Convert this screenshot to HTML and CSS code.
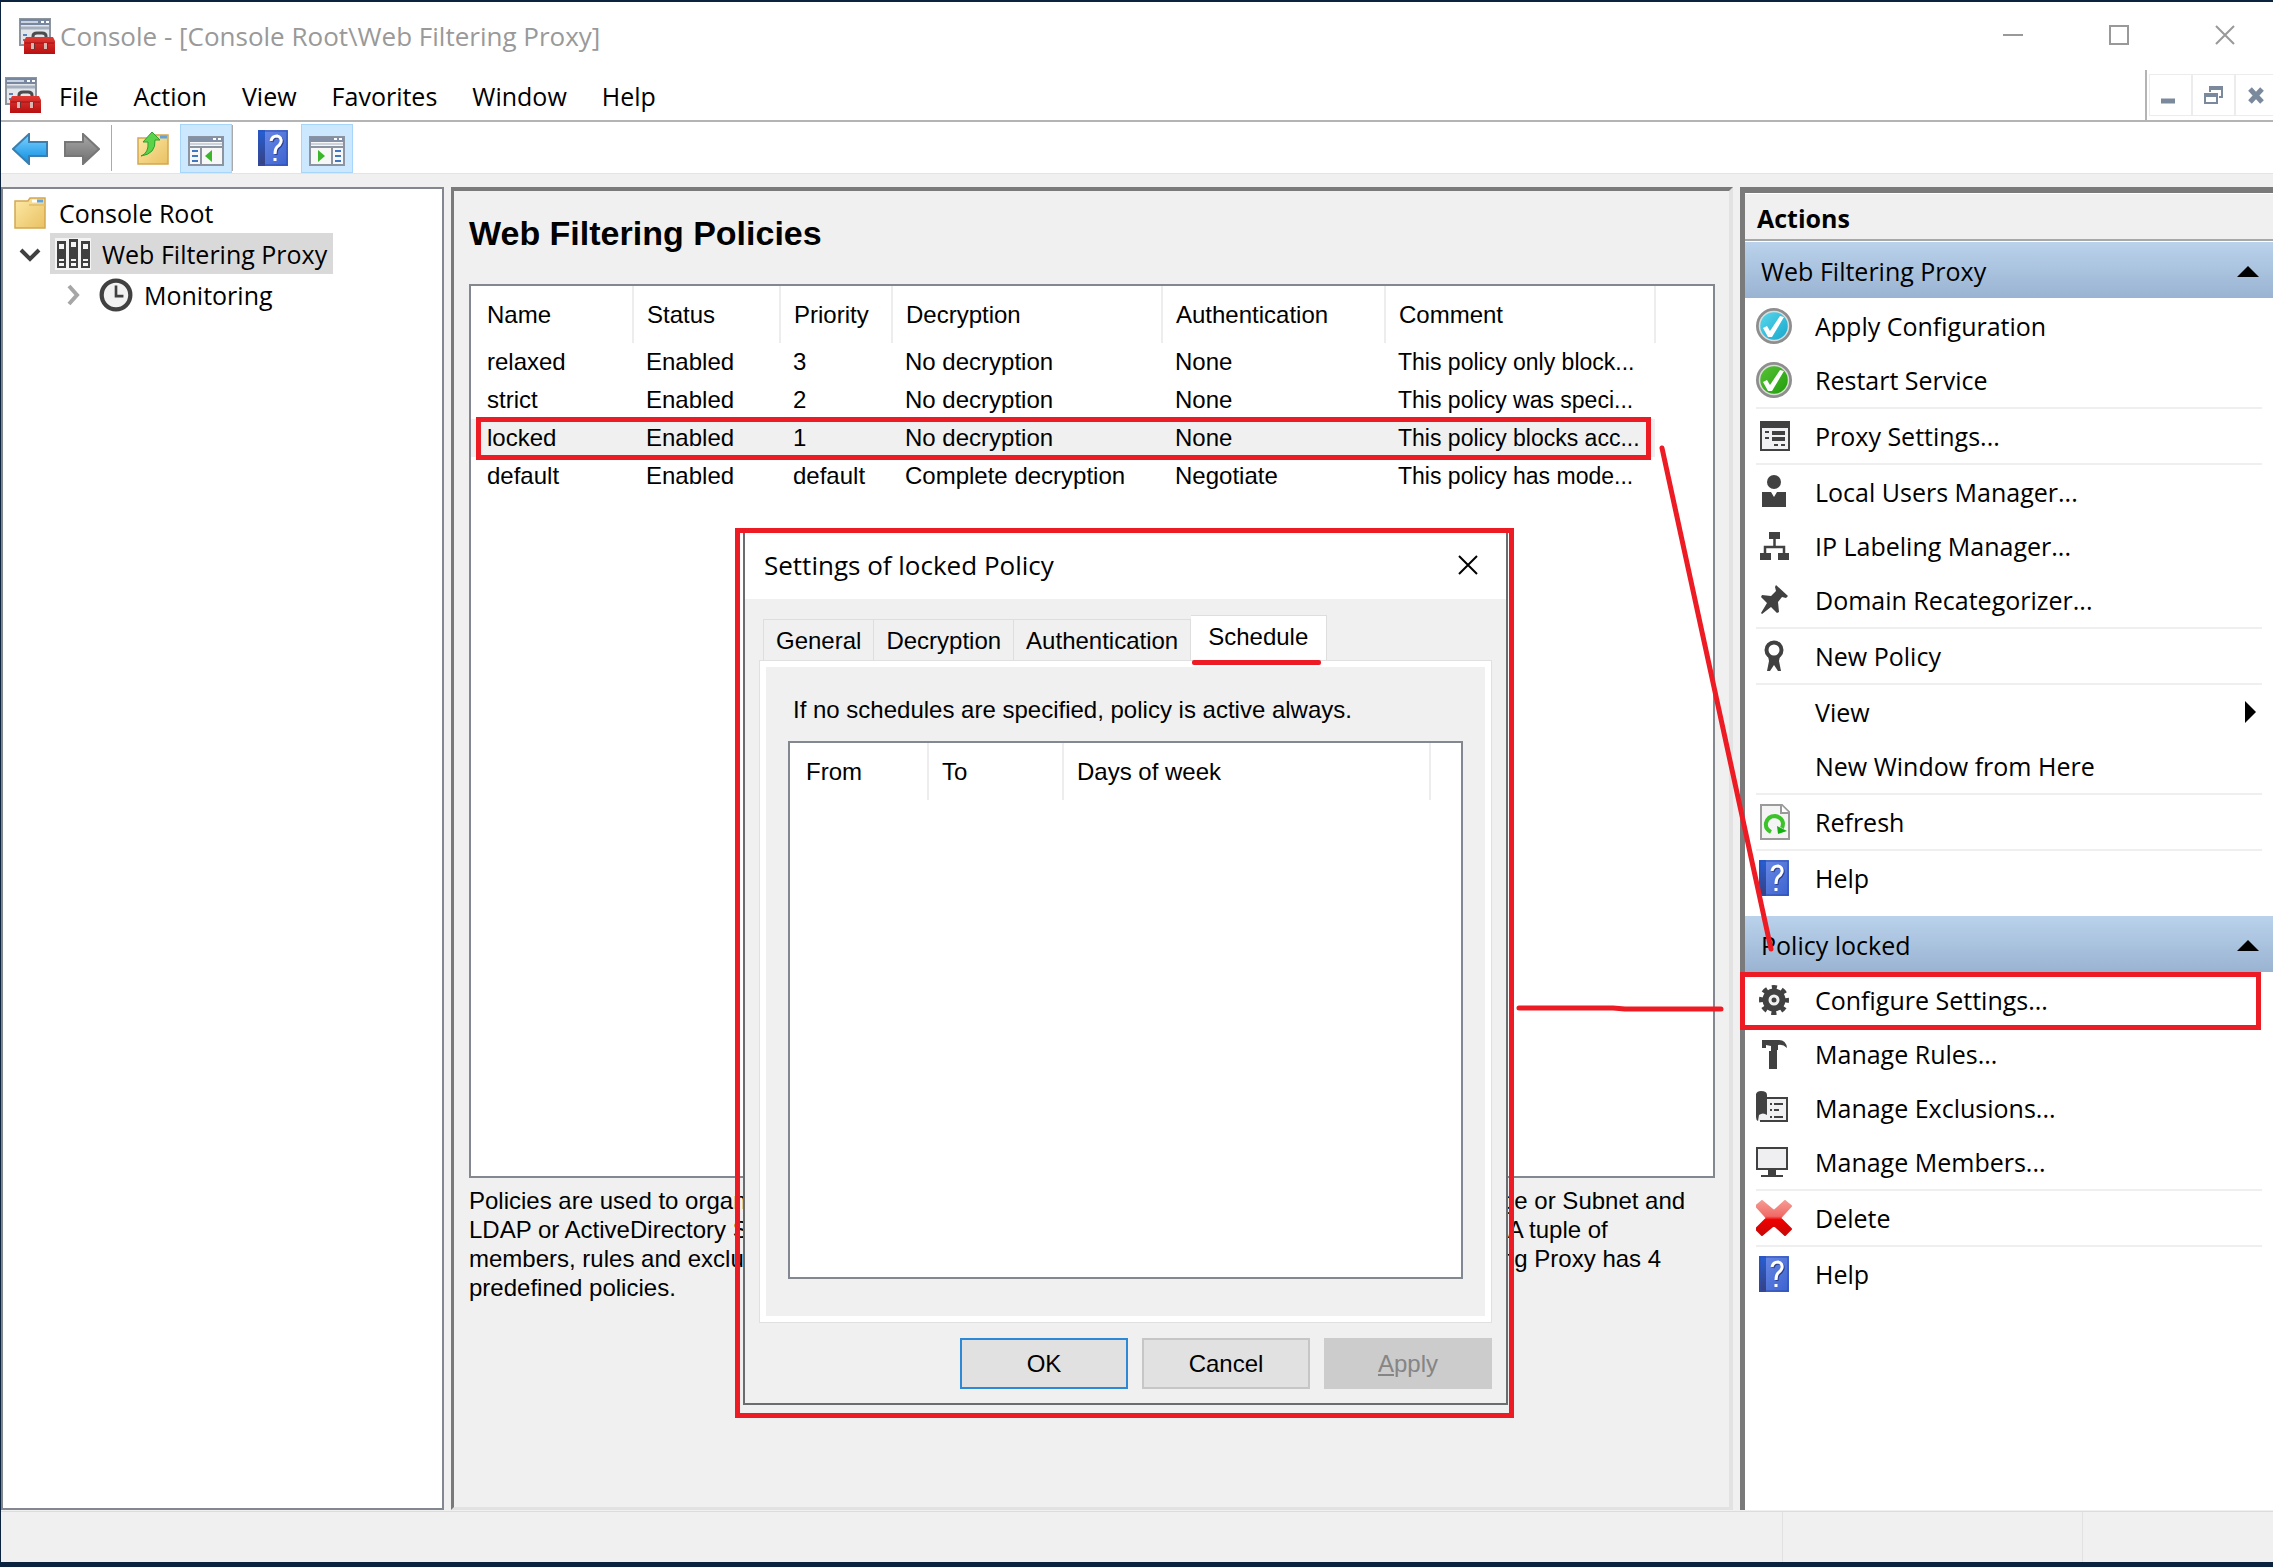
FILE: index.html
```html
<!DOCTYPE html>
<html lang="en">
<head>
<meta charset="utf-8">
<title>Console</title>
<link rel="stylesheet" href="styles.css">
</head>
<body>
<svg class="defs" aria-hidden="true">
  <defs>
    <linearGradient id="g-folder" x1="0" y1="0" x2="1" y2="1"><stop offset="0" stop-color="#fde9a6"/><stop offset="1" stop-color="#e9c163"/></linearGradient>
    <linearGradient id="g-blue" x1="0" y1="0" x2="0" y2="1"><stop offset="0" stop-color="#7fd4ff"/><stop offset="1" stop-color="#0a8be0"/></linearGradient>
    <linearGradient id="g-gray" x1="0" y1="0" x2="0" y2="1"><stop offset="0" stop-color="#a8a8a8"/><stop offset="1" stop-color="#6e6e6e"/></linearGradient>
    <linearGradient id="g-book" x1="0" y1="0" x2="1" y2="1"><stop offset="0" stop-color="#6d8ce8"/><stop offset="1" stop-color="#3b62cf"/></linearGradient>
    <linearGradient id="g-spine" x1="0" y1="0" x2="0" y2="1"><stop offset="0" stop-color="#2560d8"/><stop offset="1" stop-color="#38407c"/></linearGradient>
    <linearGradient id="g-cyan" x1="0" y1="0" x2="1" y2="1"><stop offset="0" stop-color="#5fdcf0"/><stop offset="1" stop-color="#12a3c8"/></linearGradient>
    <linearGradient id="g-green" x1="0" y1="0" x2="1" y2="1"><stop offset="0" stop-color="#5cc63a"/><stop offset="1" stop-color="#1c9a08"/></linearGradient>
    <linearGradient id="g-red" x1="0" y1="0" x2="0" y2="1"><stop offset="0" stop-color="#f59a92"/><stop offset=".45" stop-color="#f06a66"/><stop offset=".55" stop-color="#f00000"/><stop offset="1" stop-color="#c80808"/></linearGradient>
    <linearGradient id="g-box" x1="0" y1="0" x2="0" y2="1"><stop offset="0" stop-color="#e03a34"/><stop offset="1" stop-color="#b80f10"/></linearGradient>

    <symbol id="i-console" viewBox="0 0 36 36">
      <rect x="1" y="1" width="30" height="26" fill="#e3e7ec" stroke="#8d959f" stroke-width="2"/>
      <path d="M1 1h30v6H1z" fill="#76879f"/><path d="M2 4h17" stroke="#c9d3e2" stroke-width="2"/><path d="M22 4h3M27 4h3" stroke="#fff" stroke-width="2"/>
      <path d="M2 10h28" stroke="#a4afbd" stroke-width="3"/><path d="M4 17h4M4 22h3" stroke="#5b83b8" stroke-width="2"/>
      <path d="M14 20v-2q0-3 4-3h5q4 0 4 3v2" fill="none" stroke="#4c4c4c" stroke-width="3"/>
      <path d="M7 19h27l2 4v13H5V23z" fill="url(#g-box)"/><path d="M6 25h29" stroke="#a01014" stroke-width="1"/>
      <path d="M14 25v6M27 25v6" stroke="#d9b8b2" stroke-width="4"/><path d="M15.500 25v6M28.500 25v6" stroke="#6b3030" stroke-width="1"/>
    </symbol>
    <symbol id="i-back" viewBox="0 0 36 32"><path d="M1 16L17 1v8h18v14H17v8z" fill="url(#g-blue)" stroke="#3a7fb0" stroke-width="2"/></symbol>
    <symbol id="i-forward" viewBox="0 0 36 32"><path d="M35 16L19 1v8H1v14h18v8z" fill="url(#g-gray)" stroke="#777" stroke-width="2"/></symbol>
    <symbol id="i-folder" viewBox="0 0 32 32"><path d="M1 4h13l2-3h15v30H1z" fill="url(#g-folder)" stroke="#d3a850" stroke-width="1.500"/><path d="M15 8h16" stroke="#e2bd68" stroke-width="1.500"/><path d="M18 4h11" stroke="#fff" stroke-width="3"/><path d="M23 4h6" stroke="#5fa2dc" stroke-width="3"/></symbol>
    <symbol id="i-up" viewBox="0 0 32 34"><path d="M1 7h14l2-3h14v29H1z" fill="url(#g-folder)" stroke="#d3a850" stroke-width="1.500"/><path d="M23 6h7" stroke="#5fa2dc" stroke-width="3"/><path d="M4 25q8-3 7-14H6l9-10 8 8h-5q1 14-14 16z" fill="#5ad24a" stroke="#2fa02c"/></symbol>
    <symbol id="i-tree" viewBox="0 0 36 30"><rect x="1" y="1" width="34" height="28" fill="#f7f7f7" stroke="#8b94a0" stroke-width="2"/><path d="M1 1h34v5H1z" fill="#8391a8"/><path d="M25 3h3M30 3h3" stroke="#fff" stroke-width="2"/><path d="M2 8h32" stroke="#ccd3dc" stroke-width="2"/><path d="M1 11h34M13 12v17" stroke="#8b94a0" stroke-width="2"/><path d="M4 15h6M4 20h6M4 25h6" stroke="#3f78c0" stroke-width="2"/><path d="M24 14v12l-7-6z" fill="#3bb52a"/></symbol>
    <symbol id="i-pane" viewBox="0 0 36 30"><rect x="1" y="1" width="34" height="28" fill="#f7f7f7" stroke="#8b94a0" stroke-width="2"/><path d="M1 1h34v5H1z" fill="#8391a8"/><path d="M25 3h3M30 3h3" stroke="#fff" stroke-width="2"/><path d="M2 8h32" stroke="#ccd3dc" stroke-width="2"/><path d="M1 11h34M23 12v17" stroke="#8b94a0" stroke-width="2"/><path d="M26 15h6M26 20h6M26 25h6" stroke="#3f78c0" stroke-width="2"/><path d="M9 14v12l7-6z" fill="#3bb52a"/></symbol>
    <symbol id="i-help" viewBox="0 0 30 36"><rect width="30" height="36" fill="url(#g-book)"/><rect width="7" height="36" fill="url(#g-spine)"/><rect x="1" y="1" width="28" height="34" fill="none" stroke="#2f4fb0" stroke-width="1"/><path d="M13 11q1-5 6-5 5 1 4 6-1 3-4 5-2 2-2 7" fill="none" stroke="#2b3f90" stroke-width="3" transform="translate(1 1)"/><path d="M13 11q1-5 6-5 5 1 4 6-1 3-4 5-2 2-2 7M17 28v3" fill="none" stroke="#fff" stroke-width="3"/></symbol>
    <symbol id="i-binders" viewBox="0 0 36 32"><rect width="36" height="32" fill="#f4f4f4"/><g fill="#3f3f3f"><path d="M2 3h9v27H2zM14 1h9v29h-9zM26 3h9v27h-9z"/></g><g fill="#f4f4f4"><path d="M4 6h5v5H4zM16 4h5v5h-5zM28 6h5v5h-5zM4 21h5v2H4zM4 25h5v3H4zM16 21h5v2h-5zM16 25h5v3h-5zM28 21h5v2h-5zM28 25h5v3h-5z"/></g></symbol>
    <symbol id="i-clock" viewBox="0 0 32 32"><circle cx="16" cy="16" r="13.500" fill="#f2f2f2" stroke="#414141" stroke-width="4"/><path d="M16 7v10h7" fill="none" stroke="#414141" stroke-width="2.500"/></symbol>
    <symbol id="i-apply" viewBox="0 0 36 36"><circle cx="18" cy="18" r="16.500" fill="url(#g-cyan)" stroke="#8e8e8e" stroke-width="3"/><circle cx="18" cy="18" r="14.500" fill="none" stroke="#dcdcdc" stroke-width="1.500"/><path d="M7 20l4-2 3 5 10-15 4 1-12 20h-4z" fill="#fff"/></symbol>
    <symbol id="i-restart" viewBox="0 0 36 36"><circle cx="18" cy="18" r="16.500" fill="url(#g-green)" stroke="#8e8e8e" stroke-width="3"/><circle cx="18" cy="18" r="14.500" fill="none" stroke="#dcdcdc" stroke-width="1.500"/><path d="M7 20l4-2 3 5 10-15 4 1-12 20h-4z" fill="#fff"/></symbol>
    <symbol id="i-settings" viewBox="0 0 36 36"><rect x="5" y="4" width="28" height="28" fill="#f1f1f3" stroke="#414141" stroke-width="2"/><path d="M4 3h30v7H4z" fill="#414141"/><path d="M9 14h4M9 20h4M18 27h4M25 27h4" stroke="#414141" stroke-width="2"/><path d="M16 15h13M16 21h13" stroke="#414141" stroke-width="4"/></symbol>
    <symbol id="i-user" viewBox="0 0 36 36"><circle cx="18" cy="8" r="7" fill="#414141"/><path d="M6 18h9l3 5 3-5h9v15H6z" fill="#414141"/></symbol>
    <symbol id="i-net" viewBox="0 0 36 36"><path d="M13 4h11v7H13zM4 25h11v7H4zM22 25h11v7H22z" fill="#414141"/><path d="M18.500 10v9M9 26v-7h19v7" fill="none" stroke="#414141" stroke-width="2.500"/></symbol>
    <symbol id="i-pin" viewBox="0 0 36 36"><path d="M20 3l12 11-2 2-4-1-4 5 1 10-2 1-6-6-9 7-1-1 6-10-6-6 1-2 9 1 5-5-1-4z" fill="#414141"/></symbol>
    <symbol id="i-ribbon" viewBox="0 0 36 36"><circle cx="18" cy="12" r="7.500" fill="none" stroke="#414141" stroke-width="4"/><path d="M12 18h12l-1 5 2 10h-3l-4-6-4 6h-3l2-10z" fill="#414141"/></symbol>
    <symbol id="i-refresh" viewBox="0 0 36 36"><path d="M5 1h21l7 7v27H5z" fill="#f4f4f4" stroke="#9a9a9a" stroke-width="2"/><path d="M25 1v8h8" fill="#fff" stroke="#9a9a9a" stroke-width="2"/><path d="M15 28q-6-3-5-9 2-7 9-7 7 1 8 7 0 3-1 5" fill="none" stroke="#3cc22b" stroke-width="4"/><path d="M21 22l10 5-9 3z" fill="#16b010"/></symbol>
    <symbol id="i-gear" viewBox="0 0 36 36"><circle cx="18" cy="18" r="12.500" fill="none" stroke="#414141" stroke-width="5" stroke-dasharray="5 4.820" stroke-dashoffset="2.500"/><circle cx="18" cy="18" r="8.500" fill="#f0f0f0" stroke="#414141" stroke-width="6"/><circle cx="18" cy="18" r="2.500" fill="#414141"/></symbol>
    <symbol id="i-hammer" viewBox="0 0 36 36"><path d="M6 4h17q7 0 8 8-4-4-9-3v5h-1v19h-8V15h2v-5l-5-1v3H6z" fill="#414141"/></symbol>
    <symbol id="i-exclude" viewBox="0 0 36 36"><path d="M7 8h24v23H2V24z" fill="#f1f1f3"/><path d="M11 8h20v23H4" fill="none" stroke="#414141" stroke-width="2"/><path d="M0 4q1-3 5-3 6 0 6 4v20q-4-3-8 0l-1 6q-2-1-2-4z" fill="#414141"/><path d="M14 14h2M18 14h9M14 20h2M18 20h5M14 27h2M18 27h9" stroke="#414141" stroke-width="2"/></symbol>
    <symbol id="i-monitor" viewBox="0 0 36 36"><rect x="1" y="4" width="30" height="21" fill="#efeff1" stroke="#414141" stroke-width="2"/><path d="M12 25h8v6h7v2H5v-2h7z" fill="#414141"/></symbol>
    <symbol id="i-delete" viewBox="0 0 36 36"><path d="M6 1l12 10L29 1l6 5-11 12 11 11-6 6-11-10L6 35l-6-6 11-11L0 6z" fill="url(#g-red)" stroke="url(#g-red)" stroke-linejoin="round" stroke-width="2"/></symbol>
    <symbol id="i-close" viewBox="0 0 20 20"><path d="M1 1l18 18M19 1L1 19" stroke="currentColor" stroke-width="2"/></symbol>
  </defs>
</svg>

<div class="window">
  <header class="titlebar">
    <svg class="ico36"><use href="#i-console"/></svg>
    <h1 class="title">Console - [Console Root\Web Filtering Proxy]</h1>
    <div class="caption-buttons">
      <button aria-label="Minimize"><svg width="20" height="20"><path d="M0 10h20" stroke="currentColor" stroke-width="2"/></svg></button>
      <button aria-label="Maximize"><svg width="20" height="20"><path d="M1 1h18v18H1z" fill="none" stroke="currentColor" stroke-width="2"/></svg></button>
      <button aria-label="Close"><svg width="20" height="20"><use href="#i-close"/></svg></button>
    </div>
  </header>

  <nav class="menubar" aria-label="Menu">
    <svg class="ico36"><use href="#i-console"/></svg>
    <button>File</button><button>Action</button><button>View</button><button>Favorites</button><button>Window</button><button>Help</button>
    <div class="mdi-buttons">
      <button aria-label="Minimize child"><svg width="20" height="20"><path d="M0 16h14" stroke="currentColor" stroke-width="5"/></svg></button>
      <button aria-label="Restore child"><svg width="20" height="20"><path d="M6 7V3h12v9h-3M1 10h12v8H1z" fill="none" stroke="currentColor" stroke-width="2"/><path d="M5 3h14M0 10h14" stroke="currentColor" stroke-width="4"/></svg></button>
      <button aria-label="Close child"><svg width="20" height="20"><path d="M3 4l12 13M15 4L3 17" stroke="currentColor" stroke-width="5"/></svg></button>
    </div>
  </nav>

  <div class="toolbar" role="toolbar">
    <button aria-label="Back"><svg width="36" height="32"><use href="#i-back"/></svg></button>
    <button class="tool-fwd" aria-label="Forward"><svg width="36" height="32"><use href="#i-forward"/></svg></button>
    <span class="tool-sep"></span>
    <button class="tool-up" aria-label="Up one level"><svg width="32" height="34"><use href="#i-up"/></svg></button>
    <button class="on" aria-label="Show console tree"><svg width="36" height="30"><use href="#i-tree"/></svg></button>
    <span class="tool-sep"></span>
    <button class="tool-help" aria-label="Help"><svg width="30" height="36"><use href="#i-help"/></svg></button>
    <button class="on" aria-label="Show action pane"><svg width="36" height="30"><use href="#i-pane"/></svg></button>
  </div>

  <main class="workspace">
    <section class="tree" aria-label="Console tree">
      <div class="node"><svg class="n-ico" width="32" height="32"><use href="#i-folder"/></svg>Console Root</div>
      <div class="node child">
        <svg class="chev" width="22" height="22"><path d="M2 7l9 9 9-9" fill="none" stroke="#414141" stroke-width="4"/></svg>
        <span class="selected"><svg class="n-ico" width="36" height="32"><use href="#i-binders"/></svg>Web Filtering Proxy</span>
      </div>
      <div class="node grandchild">
        <svg class="chev" width="22" height="22"><path d="M6 2l8 9-8 9" fill="none" stroke="#a6a6a6" stroke-width="4"/></svg>
        <span class="plain"><svg class="n-ico" width="34" height="34"><use href="#i-clock"/></svg>Monitoring</span>
      </div>
    </section>

    <section class="policies">
      <h2>Web Filtering Policies</h2>
      <div class="list">
        <table class="policy-table">
          <colgroup><col class="c-name"><col class="c-status"><col class="c-prio"><col class="c-dec"><col class="c-auth"><col class="c-com"></colgroup>
          <thead><tr><th>Name</th><th>Status</th><th>Priority</th><th>Decryption</th><th>Authentication</th><th>Comment</th></tr></thead>
          <tbody>
            <tr><td>relaxed</td><td>Enabled</td><td>3</td><td>No decryption</td><td>None</td><td>This policy only block...</td></tr>
            <tr><td>strict</td><td>Enabled</td><td>2</td><td>No decryption</td><td>None</td><td>This policy was speci...</td></tr>
            <tr class="current"><td>locked</td><td>Enabled</td><td>1</td><td>No decryption</td><td>None</td><td>This policy blocks acc...</td></tr>
            <tr><td>default</td><td>Enabled</td><td>default</td><td>Complete decryption</td><td>Negotiate</td><td>This policy has mode...</td></tr>
          </tbody>
        </table>
        <span class="mark mark-row"></span>
      </div>
      <div class="about">
        <p>Policies are used to organi<br>LDAP or ActiveDirectory S<br>members, rules and exclus<br>predefined policies.</p>
        <p>ge or Subnet and<br>&nbsp;A tuple of<br>ng Proxy has 4</p>
      </div>

      <div class="callout">
        <div class="dialog" role="dialog" aria-labelledby="dlg-title">
          <div class="dlg-title"><h3 id="dlg-title">Settings of locked Policy</h3><button aria-label="Close dialog"><svg width="20" height="20"><use href="#i-close"/></svg></button></div>
          <div class="dlg-body">
            <div class="tabs" role="tablist">
              <button role="tab">General</button><button role="tab">Decryption</button><button role="tab">Authentication</button><button role="tab" class="active" aria-selected="true">Schedule</button>
            </div>
            <div class="tab-panel" role="tabpanel">
              <p>If no schedules are specified, policy is active always.</p>
              <div class="list">
                <table class="schedule-table">
                  <colgroup><col class="c-from"><col class="c-to"><col class="c-days"></colgroup>
                  <thead><tr><th>From</th><th>To</th><th>Days of week</th></tr></thead>
                </table>
              </div>
            </div>
            <div class="dlg-buttons"><button class="default">OK</button><button>Cancel</button><button disabled><u>A</u>pply</button></div>
          </div>
        </div>
      </div>
    </section>

    <aside class="actions">
      <h2>Actions</h2>
      <button class="group">Web Filtering Proxy<svg width="22" height="11"><path d="M0 11L11 0l11 11z"/></svg></button>
      <ul>
        <li><button><svg class="ico36"><use href="#i-apply"/></svg>Apply Configuration</button></li>
        <li><button><svg class="ico36"><use href="#i-restart"/></svg>Restart Service</button></li>
        <li class="sep"><button><svg class="ico36"><use href="#i-settings"/></svg>Proxy Settings...</button></li>
        <li class="sep"><button><svg class="ico36"><use href="#i-user"/></svg>Local Users Manager...</button></li>
        <li><button><svg class="ico36"><use href="#i-net"/></svg>IP Labeling Manager...</button></li>
        <li><button><svg class="ico36"><use href="#i-pin"/></svg>Domain Recategorizer...</button></li>
        <li class="sep"><button><svg class="ico36"><use href="#i-ribbon"/></svg>New Policy</button></li>
        <li class="sep"><button><span class="ico36"></span>View<svg class="more" width="11" height="22"><path d="M0 0l11 11L0 22z"/></svg></button></li>
        <li><button><span class="ico36"></span>New Window from Here</button></li>
        <li class="sep"><button><svg class="ico36"><use href="#i-refresh"/></svg>Refresh</button></li>
        <li class="sep"><button><svg class="ico36"><use href="#i-help"/></svg>Help</button></li>
      </ul>
      <button class="group">Policy locked<svg width="22" height="11"><path d="M0 11L11 0l11 11z"/></svg></button>
      <ul>
        <li><button><svg class="ico36"><use href="#i-gear"/></svg>Configure Settings...</button><span class="mark mark-action"></span></li>
        <li><button><svg class="ico36"><use href="#i-hammer"/></svg>Manage Rules...</button></li>
        <li><button><svg class="ico36"><use href="#i-exclude"/></svg>Manage Exclusions...</button></li>
        <li><button><svg class="ico36"><use href="#i-monitor"/></svg>Manage Members...</button></li>
        <li class="sep"><button><svg class="ico36"><use href="#i-delete"/></svg>Delete</button></li>
        <li class="sep"><button><svg class="ico36"><use href="#i-help"/></svg>Help</button></li>
      </ul>
    </aside>

    <svg class="links" width="260" height="580" fill="none" stroke="#ed1c24" stroke-width="5" stroke-linecap="round" aria-hidden="true">
      <path d="M149 8L258 509"/><path d="M6 568L100 568L112 569L208 569"/>
    </svg>
  </main>

  <footer class="statusbar"><span></span><span></span><span></span></footer>
</div>
</body>
</html>
```
FILE: styles.css
```css
* { box-sizing: border-box; margin: 0; padding: 0; }

body { background: #0c2340; color: #000; font: 25px/36px "Open Sans", "Noto Sans", sans-serif; }
button { background: none; border: 0; color: inherit; font: inherit; text-align: left; }
svg { display: block; flex: none; }
h1, h2, h3 { font: inherit; }
ul { list-style: none; }
.defs { position: absolute; width: 0; height: 0; }
.ico36 { width: 36px; height: 36px; flex: none; }

.window {
  min-height: 100vh; display: flex; flex-direction: column; background: #f0f0f0;
  border: solid #0c2340; border-width: 2px 0 5px 1px;
}

/* title bar and menus */
.titlebar { display: flex; align-items: center; height: 68px; padding-left: 18px; background: #fff; color: #999; }
.title { flex: 1; padding-left: 5px; font-size: 26px; }
.caption-buttons { display: flex; gap: 86px; padding: 0 38px 2px 0; }

.menubar { display: flex; align-items: center; height: 52px; padding-left: 4px; background: #fff; border-bottom: 2px solid #b4b4b4; }
.menubar > button { padding: 1px 17px 0 18px; }
.mdi-buttons { display: flex; align-self: stretch; align-items: center; margin-left: auto; padding-left: 2px; border-left: 2px solid #b4b4b4; color: #7a899c; }
.mdi-buttons button { width: 43px; height: 42px; padding-left: 11px; border: 1px solid #ececec; }
.mdi-buttons button:last-child { width: 38px; border-right: 0; }

.toolbar { display: flex; align-items: center; height: 52px; padding: 2px 0 1px 11px; background: #fff; border-bottom: 1px solid #e4e4e4; }
.toolbar button { height: 49px; padding: 2px 16px 0 0; }
.toolbar .tool-fwd { padding-right: 11px; }
.toolbar .on { width: 52px; padding: 6px 7px 0; background: #cce8ff; border: 1px solid #a8d6fa; }
.toolbar .tool-up { padding: 0 11px 0 25px; }
.toolbar .tool-help { padding: 0 13px 0 25px; }
.tool-sep { width: 1px; height: 46px; background: #aaa; }

/* three-pane work area */
.workspace { position: relative; flex: 1; display: grid; grid-template-columns: 443px minmax(0, 1fr) 533px; gap: 7px; padding: 13px 0 1px; }

.tree { padding: 3px 0 0 6px; background: #fff; border: 2px solid #828790; }
.node { display: flex; align-items: center; height: 41px; padding-left: 5px; gap: 13px; }
.child { padding-left: 10px; gap: 9px; }
.grandchild { padding-left: 54px; gap: 9px; }
.selected, .plain { display: flex; align-items: center; gap: 11px; height: 41px; padding: 0 6px 0 5px; background: #d9d9d9; }
.plain { background: none; }

.policies { position: relative; display: flex; flex-direction: column; padding: 24px 14px 0 15px; border: solid; border-width: 4px 4px 3px 3px; border-color: #7a7a7a #e2e2e2 #e2e2e2 #7a7a7a; }
.policies h2 { height: 69px; font: bold 34px/36px "Liberation Sans", Arial, sans-serif; }
.list { position: relative; flex: 1; background: #fff; border: 2px solid #828790; }
table { border-collapse: collapse; table-layout: fixed; font: 24px/36px "Liberation Sans", Arial, sans-serif; text-align: left; white-space: nowrap; }
th { height: 57px; font-weight: normal; border-right: 2px solid #ededed; }
th, td { padding-left: 13px; }
th:first-child, td:first-child { padding-left: 16px; }
td { height: 38px; }
td:last-child { font-size: 23px; }
.policy-table { width: 1184px; }
.c-name { width: 162px; } .c-status { width: 147px; } .c-prio { width: 112px; }
.c-dec { width: 270px; } .c-auth { width: 223px; } .c-com { width: 270px; }
.current { background: #f0f0f0; }

.mark { position: absolute; border: 5px solid #ed1c24; }
.mark-row { left: 5px; top: 131px; width: 1175px; height: 43px; }
.mark-action { left: -5px; top: -1px; right: 12px; height: 58px; }
.about { display: grid; grid-template-columns: 1032px 1fr; height: 329px; padding-top: 8px; font: 24px/29px "Liberation Sans", Arial, sans-serif; white-space: nowrap; }

/* policy settings dialog */
.callout { position: absolute; left: 281px; top: 337px; width: 779px; border: 5px solid #ed1c24; padding: 0 1px 8px 3px; }
.dialog { background: #f0f0f0; border: 2px solid #6a6d70; border-top: 0; }
.dlg-title { display: flex; align-items: center; justify-content: space-between; height: 66px; padding: 0 28px 2px 19px; background: #fff; font-size: 26px; }
.dlg-body { padding: 16px 14px 14px; }
.tabs, .tab-panel, .dlg-buttons { font: 24px/28px "Liberation Sans", Arial, sans-serif; }
.tabs { display: flex; align-items: flex-end; padding-left: 4px; }
.tabs button { height: 41px; padding: 2px 12px 0; border: 1px solid #dedede; border-width: 1px 1px 0; }
.tabs button + button { border-left: 0; }
.tabs .active { position: relative; height: 45px; padding: 0 18px 2px 17px; background: #fff; }
.tabs .active::after { content: ""; position: absolute; left: 1px; right: 5px; bottom: -5px; height: 5px; border-radius: 2px; background: #ed1c24; }
.tab-panel { display: flex; flex-direction: column; height: 663px; padding: 35px 20px 36px; background: #f0f0f0; border: 1px solid #e0e0e0; box-shadow: inset 0 0 0 6px #fff; }
.tab-panel p { padding: 0 0 17px 13px; }
.tab-panel .list { margin: 0 8px 7px; }
.schedule-table { width: 640px; }
.c-from { width: 138px; } .c-to { width: 135px; } .c-days { width: 367px; }
.dlg-buttons { display: flex; justify-content: flex-end; gap: 14px; padding-top: 15px; }
.dlg-buttons button { width: 168px; height: 51px; background: #e1e1e1; border: 2px solid #c6c6c6; text-align: center; }
.dlg-buttons .default { border-color: #2d89d6; }
.dlg-buttons button:disabled { background: #ccc; border-color: #ccc; color: #858585; }

/* actions pane */
.actions { background: #fff; border: solid #7a7a7a; border-width: 6px 0 0 5px; }
.actions h2 { height: 47px; margin: 1px 0; padding: 6px 0 0 12px; background: #f0f0f0; border-bottom: 2px solid #a8a8a8; font-weight: bold; }
.group { display: flex; align-items: center; justify-content: space-between; width: 100%; height: 56px; padding: 2px 14px 0 16px; background: linear-gradient(#bad2eb, #99b3d2); }
.actions ul { padding: 1px 0 11px; }
.actions li { position: relative; }
.actions li button { display: flex; align-items: center; gap: 23px; width: 100%; height: 54px; padding: 0 17px 0 11px; }
.actions li.sep::before { content: ""; display: block; height: 2px; margin: 0 11px; background: #efefef; }
.actions .more { margin-left: auto; }

.links { position: absolute; right: 500px; top: 266px; overflow: visible; pointer-events: none; }
.statusbar { display: grid; grid-template-columns: 1fr 300px 191px; height: 51px; border-top: 1px solid #dcdcdc; }
.statusbar span + span { border-left: 1px solid #e2e2e2; }
```
